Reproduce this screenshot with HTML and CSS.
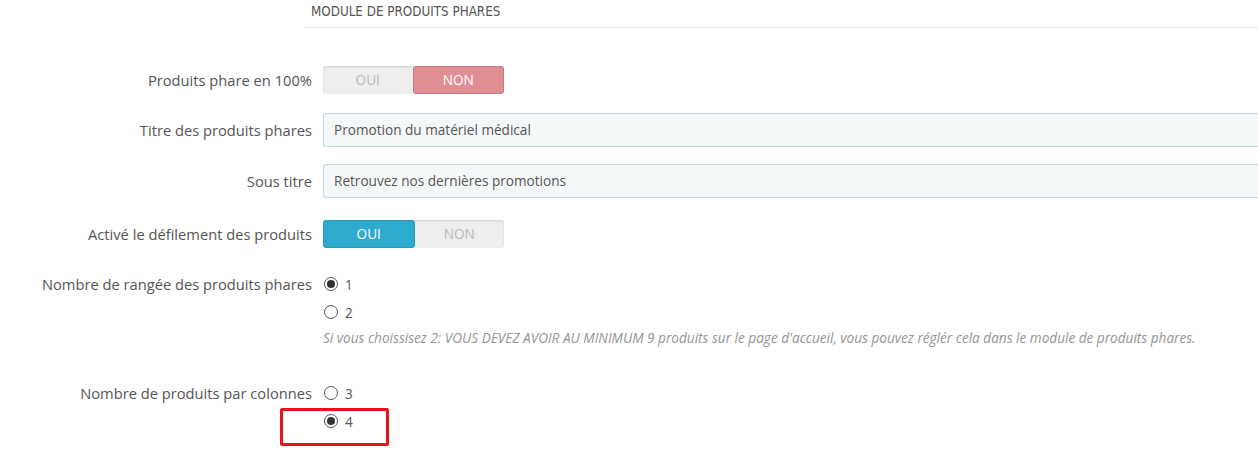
FILE: index.html
```html
<!DOCTYPE html>
<html lang="fr">
<head>
  <meta charset="UTF-8">
  <title>Module de produits phares</title>
  <link rel="stylesheet" href="styles.css">
</head>
<body>
  <div class="panel">
    <h3 class="panel-heading">Module de produits phares</h3>
    <div class="form">
      <div class="form-group">
        <label>Produits phare en 100%</label>
        <div class="switch">
          <span class="off">OUI</span>
          <span class="on no">NON</span>
        </div>
      </div>
      <div class="form-group text">
        <label>Titre des produits phares</label>
        <div class="input">Promotion du matériel médical</div>
      </div>
      <div class="form-group text">
        <label>Sous titre</label>
        <div class="input">Retrouvez nos dernières promotions</div>
      </div>
      <div class="form-group">
        <label>Activé le défilement des produits</label>
        <div class="switch">
          <span class="on yes">OUI</span>
          <span class="off">NON</span>
        </div>
      </div>
      <div class="form-group radios">
        <label>Nombre de rangée des produits phares</label>
        <div>
          <div class="radio"><span class="dot checked"></span>1</div>
          <div class="radio"><span class="dot"></span>2</div>
          <p class="help">Si vous choissisez 2: VOUS DEVEZ AVOIR AU MINIMUM 9 produits sur le page d'accueil, vous pouvez réglér cela dans le module de produits phares.</p>
        </div>
      </div>
      <div class="form-group radios last">
        <label>Nombre de produits par colonnes</label>
        <div class="choices">
          <div class="radio"><span class="dot"></span>3</div>
          <div class="radio"><span class="dot checked"></span>4</div>
          <div class="highlight"></div>
        </div>
      </div>
    </div>
  </div>
</body>
</html>
```

FILE: styles.css
```css
* {box-sizing: border-box;}
body {
  margin: 0;
  min-height: 452px;
  padding-bottom: 20px;
  background: #fff;
  font-family: "Open Sans", "Liberation Sans", sans-serif;
  font-size: 13.6px;
  color: #555;
}
.panel-heading {
  margin: 0 0 0 304px;
  height: 28px;
  padding: 4px 7px 0;
  border-bottom: 1px solid #eee;
  font-family: "DejaVu Sans Condensed", "Open Sans", sans-serif;
  font-weight: normal;
  font-size: 13.3px;
  text-transform: uppercase;
  color: #555;
}
.form {padding-top: 38px;}
.form-group {
  display: grid;
  grid-template-columns: 312px 1fr;
  column-gap: 11px;
  align-items: start;
  margin-bottom: 19px;
}
.form-group label {
  text-align: right;
  font-size: 14.7px;
  line-height: 28px;
}
.form-group.text {margin-bottom: 17px;}
.form-group.text + .form-group:not(.text) {margin-top: 22px;}
.form-group.text label {line-height: 34px;}
.switch {
  display: flex;
  width: 181px;
  height: 28px;
  background: #eee;
  border-radius: 3px;
  box-shadow: inset 0 1px 2px rgba(0,0,0,.12);
}
.switch span {
  flex: 1;
  text-align: center;
  line-height: 28px;
  border-radius: 3px;
}
.switch .off {color: #bbb;}
.switch .on {color: #fff;}
.switch .no {background: #e08e94; border: 1px solid #c97a80; line-height: 26px;}
.switch .yes {background: #2eaace; border: 1px solid #2699bb; line-height: 26px;}
.input {
  height: 34px;
  line-height: 32px;
  padding: 0 10px;
  background: #f5f8f9;
  border: 1px solid #c7d6db;
  border-right: none;
  border-radius: 3px 0 0 3px;
}
.radios {margin-top: 22px; margin-bottom: 0;}
.radios.last {margin-top: 32px;}
.radio {
  display: flex;
  align-items: center;
  gap: 7px;
  height: 28px;
}
.dot {
  width: 14px;
  height: 14px;
  border: 1px solid #555;
  border-radius: 50%;
  margin-left: 1px;
  display: flex;
  align-items: center;
  justify-content: center;
}
.dot.checked::after {
  content: "";
  width: 8px;
  height: 8px;
  border-radius: 50%;
  background: #333;
}
.help {
  margin: 2px 0 0;
  font-style: italic;
  font-size: 13.6px;
  color: #959595;
}
.choices {position: relative;}
.highlight {
  position: absolute;
  left: -43px;
  top: 29px;
  width: 109px;
  height: 38px;
  border: 3px solid #e2161c;
  border-radius: 2px;
}
```
